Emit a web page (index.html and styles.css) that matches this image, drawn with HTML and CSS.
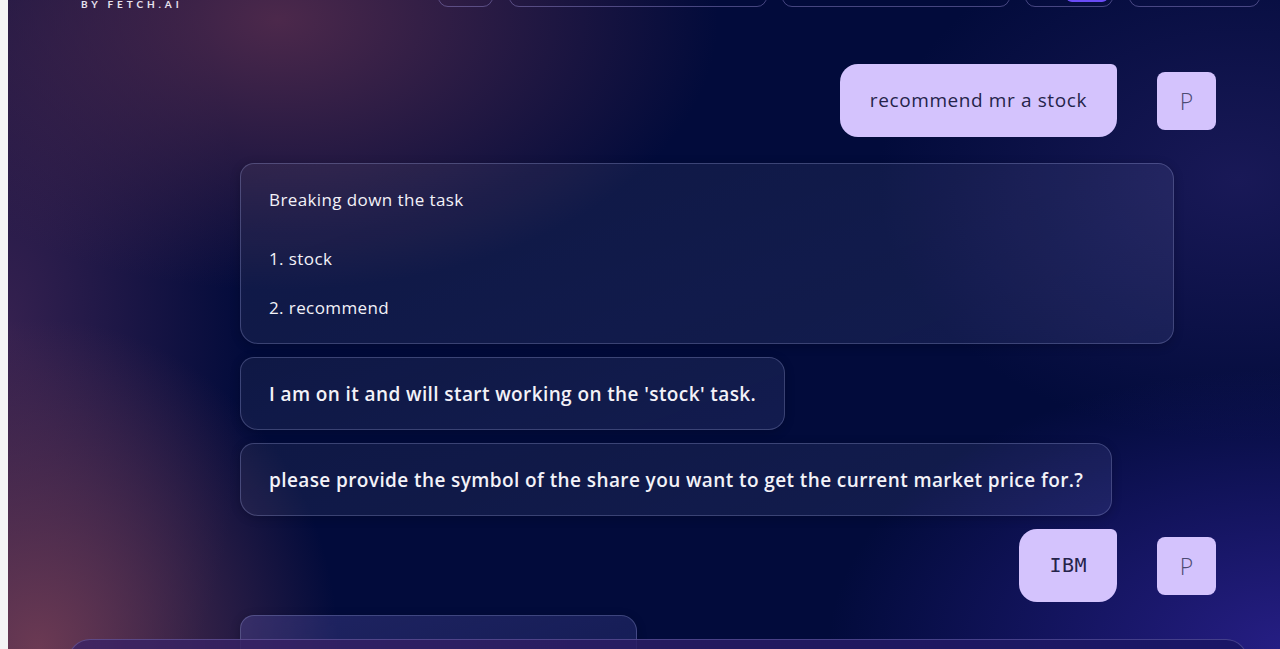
FILE: index.html
```html
<!DOCTYPE html>
<html lang="en">
<head>
<meta charset="utf-8">
<title>Chat</title>
<link rel="stylesheet" href="styles.css">
</head>
<body>
<div class="page">
  <div class="strip"></div>
  <main class="app">
    <header class="topbar">
      <div class="logo">
        <div class="logo-by">BY FETCH.AI</div>
      </div>
      <nav class="nav">
        <div class="nav-btn w55"></div>
        <div class="nav-btn w258"></div>
        <div class="nav-btn w228"></div>
        <div class="nav-btn w88"><span class="toggle"></span></div>
        <div class="nav-btn w131"><span class="chip"></span><span class="mark"></span></div>
      </nav>
    </header>

    <section class="chat">
      <div class="user-row first">
        <div class="user-bubble">recommend mr a stock</div>
        <div class="avatar">P</div>
      </div>

      <div class="agent-col">
        <div class="card full">
          <p class="card-title">Breaking down the task</p>
          <p class="card-item">1. stock</p>
          <p class="card-item last">2. recommend</p>
        </div>
        <div class="card">
          <p class="card-text">I am on it and will start working on the 'stock' task.</p>
        </div>
        <div class="card">
          <p class="card-text">please provide the symbol of the share you want to get the current market price for.?</p>
        </div>
      </div>

      <div class="user-row">
        <div class="user-bubble mono">IBM</div>
        <div class="avatar">P</div>
      </div>

      <div class="agent-col">
        <div class="card partial"><p class="card-text">&nbsp;</p></div>
      </div>
    </section>

    <div class="composer"></div>
  </main>
</div>
</body>
</html>
```

FILE: styles.css
```css
* { box-sizing: border-box; }

html, body {
  margin: 0;
  padding: 0;
  height: 649px;
  overflow: hidden;
  font-family: "Open Sans", "Noto Sans", sans-serif;
}

.page {
  display: flex;
  height: 649px;
}

.strip {
  width: 8px;
  flex: none;
  background: #f4f4f5;
}

.app {
  flex: 1;
  position: relative;
  overflow: hidden;
  display: flex;
  flex-direction: column;
  background:
    radial-gradient(ellipse 300px 330px at 30px 649px, rgba(112, 60, 84, 0.95), rgba(112, 60, 84, 0) 100%),
    radial-gradient(ellipse 440px 270px at 270px 20px, rgba(80, 42, 76, 0.95), rgba(80, 42, 76, 0) 100%),
    radial-gradient(ellipse 460px 280px at 1280px 649px, rgba(42, 32, 140, 0.9), rgba(42, 32, 140, 0) 100%),
    radial-gradient(ellipse 360px 260px at 1230px 180px, rgba(44, 36, 110, 0.55), rgba(44, 36, 110, 0) 100%),
    radial-gradient(ellipse 240px 520px at 0px 330px, rgba(70, 40, 86, 0.75), rgba(70, 40, 86, 0) 100%),
    #020b3b;
}

/* header (page is scrolled, only the bottom edge shows) */
.topbar {
  display: flex;
  align-items: flex-end;
  height: 40px;
  margin-top: -33px;
  padding: 0 20px 0 73px;
  flex: none;
}

.logo {
  display: flex;
  flex-direction: column;
  color: #e6e1ee;
}

.logo-by {
  font-family: "Lato", sans-serif;
  font-size: 10px;
  font-weight: 700;
  letter-spacing: 3.9px;
  line-height: 12px;
  margin-bottom: -3px;
}

.nav {
  margin-left: auto;
  display: flex;
  gap: 15px;
  align-items: flex-end;
}

.nav-btn {
  height: 40px;
  border: 1.5px solid rgba(150, 140, 210, 0.45);
  border-radius: 10px;
  position: relative;
}

.w55 { width: 55px; }
.w258 { width: 258px; margin-left: 1px; }
.w228 { width: 228px; }
.w88 { width: 88px; }
.w131 { width: 131px; margin-left: 1px; }

.toggle {
  position: absolute;
  right: 4px;
  bottom: 4px;
  width: 42px;
  height: 30px;
  border-radius: 6px;
  background: #6a4cf6;
}

.chip {
  position: absolute;
  left: 10px;
  bottom: 6px;
  width: 26px;
  height: 30px;
  border-radius: 3px;
  background: #c9bff0;
}

.mark {
  position: absolute;
  left: 52px;
  bottom: 7px;
  width: 2px;
  height: 4px;
  background: #0c0c30;
}

/* chat */
.chat {
  display: flex;
  flex-direction: column;
  padding-top: 57px;
}

.user-row {
  display: flex;
  justify-content: flex-end;
  align-items: center;
  gap: 40px;
  padding-right: 64px;
  margin-bottom: 13px;
}

.user-row.first { margin-bottom: 26px; }

.user-bubble {
  background: #d4c3fd;
  color: #25234a;
  font-size: 19px;
  font-weight: 500;
  letter-spacing: 0.6px;
  line-height: 23px;
  padding: 25px 30px 25px 30px;
  border-radius: 18px 6px 18px 18px;
}

.user-bubble.mono {
  font-family: "DejaVu Sans Mono", "Liberation Mono", monospace;
  font-size: 20px;
  font-weight: 400;
  letter-spacing: 0.5px;
}

.avatar {
  width: 59px;
  height: 58px;
  border-radius: 8px;
  background: #d4c3fd;
  color: #4c4a72;
  font-family: "Open Sans", sans-serif;
  font-size: 23px;
  font-weight: 300;
  display: flex;
  align-items: center;
  justify-content: center;
}

.agent-col {
  display: flex;
  flex-direction: column;
  align-items: flex-start;
  gap: 13px;
  padding: 0 106px 0 232px;
  margin-bottom: 13px;
}

.card {
  background: linear-gradient(160deg, rgba(255, 255, 255, 0.055), rgba(170, 180, 255, 0.1));
  border: 1.5px solid rgba(170, 175, 230, 0.28);
  border-radius: 14px 16px 16px 18px;
  padding: 23.5px 28px 23.5px 28px;
  color: #f3f2f8;
  box-shadow: 0 2px 10px rgba(0, 0, 20, 0.25);
}

.card.full { width: 100%; padding: 24px 28px 23px 28px; }

.card p { margin: 0; }

.card-title {
  font-size: 17px;
  font-weight: 500;
  letter-spacing: 0.4px;
  line-height: 24px;
  margin-bottom: 35px !important;
}

.card-item {
  font-size: 17px;
  font-weight: 500;
  letter-spacing: 0.4px;
  line-height: 24px;
  margin-bottom: 25px !important;
}

.card-item.last { margin-bottom: 0 !important; }

.card-text {
  font-size: 19px;
  font-weight: 600;
  letter-spacing: 0.4px;
  line-height: 24px;
}

.card.partial {
  width: 397px;
  background: linear-gradient(160deg, rgba(110, 100, 200, 0.28), rgba(120, 130, 230, 0.15));
}

.composer {
  position: absolute;
  left: 60px;
  right: 32px;
  top: 639px;
  height: 80px;
  border: 1.5px solid rgba(150, 140, 210, 0.35);
  border-radius: 22px;
  background: linear-gradient(90deg, rgba(60, 36, 100, 0.85), rgba(24, 22, 100, 0.9));
}
```
